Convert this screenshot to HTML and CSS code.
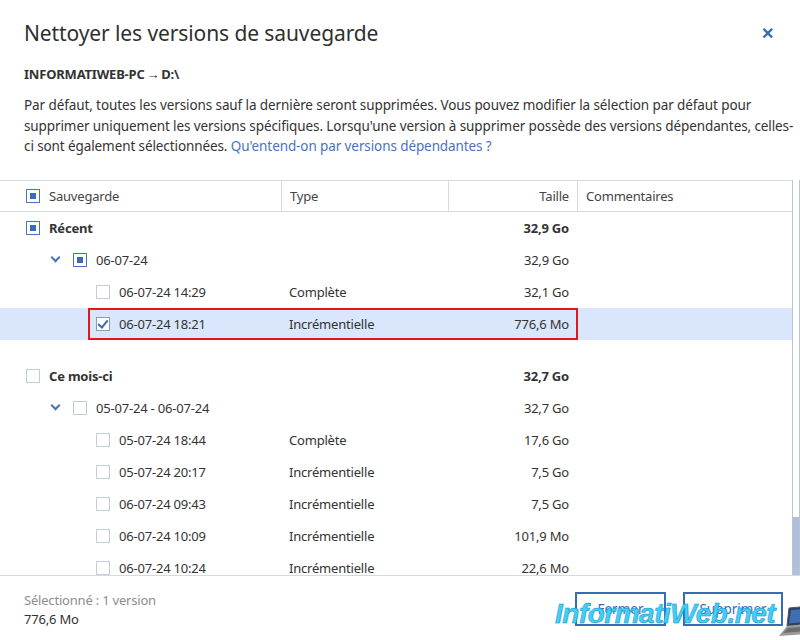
FILE: index.html
```html
<!DOCTYPE html>
<html lang="fr">
<head>
    <meta charset="UTF-8">
    <title>Nettoyer les versions de sauvegarde</title>
    <link rel="stylesheet" href="styles.css">
</head>
<body>
    <div class="dialog">
        <div class="dialog-head">
            <h1>Nettoyer les versions de sauvegarde</h1>
            <span class="close">&#x2715;</span>
        </div>
        <div class="source">INFORMATIWEB-PC&thinsp;&rarr;&thinsp;D:\</div>
        <p class="intro">Par défaut, toutes les versions sauf la dernière seront supprimées. Vous pouvez modifier la sélection par défaut pour<br>supprimer uniquement les versions spécifiques. Lorsqu'une version à supprimer possède des versions dépendantes, celles-<br>ci sont également sélectionnées. <a href="#">Qu'entend-on par versions dépendantes ?</a></p>

        <div class="table-wrap">
            <div class="table">
                <div class="row head">
                    <div class="cell name"><span class="box mixed"></span>Sauvegarde</div>
                    <div class="cell">Type</div>
                    <div class="cell size">Taille</div>
                    <div class="cell">Commentaires</div>
                </div>
                <div class="body">
                    <div class="row group">
                        <div class="cell name"><span class="box mixed"></span>Récent</div>
                        <div class="cell"></div>
                        <div class="cell size">32,9 Go</div>
                        <div class="cell"></div>
                    </div>
                    <div class="row">
                        <div class="cell name lvl1"><span class="chev"></span><span class="box mixed"></span>06-07-24</div>
                        <div class="cell"></div>
                        <div class="cell size">32,9 Go</div>
                        <div class="cell"></div>
                    </div>
                    <div class="row">
                        <div class="cell name lvl2"><span class="box"></span>06-07-24 14:29</div>
                        <div class="cell">Complète</div>
                        <div class="cell size">32,1 Go</div>
                        <div class="cell"></div>
                    </div>
                    <div class="row selected">
                        <div class="cell name lvl2"><span class="box checked"></span>06-07-24 18:21</div>
                        <div class="cell">Incrémentielle</div>
                        <div class="cell size">776,6 Mo</div>
                        <div class="cell"></div>
                        <span class="mark"></span>
                    </div>
                    <div class="spacer"></div>
                    <div class="row group">
                        <div class="cell name"><span class="box"></span>Ce mois-ci</div>
                        <div class="cell"></div>
                        <div class="cell size">32,7 Go</div>
                        <div class="cell"></div>
                    </div>
                    <div class="row">
                        <div class="cell name lvl1"><span class="chev"></span><span class="box"></span>05-07-24 - 06-07-24</div>
                        <div class="cell"></div>
                        <div class="cell size">32,7 Go</div>
                        <div class="cell"></div>
                    </div>
                    <div class="row">
                        <div class="cell name lvl2"><span class="box"></span>05-07-24 18:44</div>
                        <div class="cell">Complète</div>
                        <div class="cell size">17,6 Go</div>
                        <div class="cell"></div>
                    </div>
                    <div class="row">
                        <div class="cell name lvl2"><span class="box"></span>05-07-24 20:17</div>
                        <div class="cell">Incrémentielle</div>
                        <div class="cell size">7,5 Go</div>
                        <div class="cell"></div>
                    </div>
                    <div class="row">
                        <div class="cell name lvl2"><span class="box"></span>06-07-24 09:43</div>
                        <div class="cell">Incrémentielle</div>
                        <div class="cell size">7,5 Go</div>
                        <div class="cell"></div>
                    </div>
                    <div class="row">
                        <div class="cell name lvl2"><span class="box"></span>06-07-24 10:09</div>
                        <div class="cell">Incrémentielle</div>
                        <div class="cell size">101,9 Mo</div>
                        <div class="cell"></div>
                    </div>
                    <div class="row">
                        <div class="cell name lvl2"><span class="box"></span>06-07-24 10:24</div>
                        <div class="cell">Incrémentielle</div>
                        <div class="cell size">22,6 Mo</div>
                        <div class="cell"></div>
                    </div>
                </div>
            </div>
            <div class="scrollbar"><div class="thumb"></div></div>
        </div>

        <div class="footer">
            <div class="summary">
                <div class="muted">Sélectionné : 1 version</div>
                <div>776,6 Mo</div>
            </div>
            <div class="actions">
                <button class="btn fermer">Fermer</button>
                <button class="btn">Supprimer</button>
            </div>
        </div>

        <div class="watermark">
            <span>InformatiWeb.net</span>
            <svg width="34" height="30" viewBox="0 0 34 30">
                <polygon points="10,2 32,0 30,18 8,20" fill="#2a3f6a" stroke="#555" stroke-width="1"/>
                <polygon points="12,4 30,2.5 28.5,16 10,17.5" fill="#3f6fb0"/>
                <polygon points="8,20 30,18 26,28 0,30" fill="#9a9a9a"/>
                <polygon points="9,22 27,20.5 25,25 4,27" fill="#6d6d6d"/>
            </svg>
        </div>
    </div>
</body>
</html>
```

FILE: styles.css
```css
body {
    margin: 0;
    background: #fff;
    font-family: "Noto Sans", "Open Sans", sans-serif;
    color: #333;
}
.dialog {
    position: relative;
    width: 800px;
    height: 640px;
    overflow: hidden;
}
.dialog-head {
    display: flex;
    justify-content: space-between;
    align-items: center;
    padding: 18px 24px 0 24px;
    height: 30px;
}
h1 {
    margin: 0;
    font-size: 21px;
    font-weight: normal;
    color: #2f2f2f;
    letter-spacing: -0.1px;
}
.close {
    color: #3a6bb5;
    font-size: 16px;
    font-weight: bold;
    margin-right: 2px;
}
.source {
    margin: 17px 24px 0 24px;
    font-size: 13px;
    font-weight: bold;
    letter-spacing: -0.2px;
    color: #333;
}
.intro {
    margin: 12px 10px 0 24px;
    font-size: 13.5px;
    line-height: 20.5px;
    color: #333;
    letter-spacing: -0.1px;
    white-space: nowrap;
}
.intro a {
    color: #4a74b9;
    text-decoration: none;
}
.table-wrap {
    display: flex;
    margin-top: 23px;
    height: 395px;
    border-bottom: 1px solid #d3dae6;
}
.table {
    flex: 1;
    overflow: hidden;
    border-top: 1px solid #d3dae6;
    border-right: 1px solid #b8c4d8;
}
.row {
    position: relative;
    display: grid;
    grid-template-columns: 281px 167px 129px 1fr;
    height: 32px;
    align-items: center;
    font-size: 13px;
    letter-spacing: -0.2px;
}
.row.head {
    height: 30px;
    border-bottom: 1px solid #d3dae6;
    color: #444;
}
.row.head .cell {
    height: 100%;
    display: flex;
    align-items: center;
}
.row.head .cell + .cell {
    border-left: 1px solid #d3dae6;
}
.row.head .size {
    justify-content: flex-end;
}
.cell {
    padding: 0 8px;
    white-space: nowrap;
}
.cell.name {
    display: flex;
    align-items: center;
    padding-left: 26px;
}
.cell.lvl1 {
    padding-left: 51px;
}
.cell.lvl2 {
    padding-left: 96px;
}
.cell.size {
    text-align: right;
}
.row.group {
    font-weight: bold;
}
.row.selected {
    background: #d9e6fb;
}
.mark {
    position: absolute;
    left: 88px;
    top: 0;
    width: 486px;
    height: 28px;
    border: 2px solid #e8141b;
}
.spacer {
    height: 20px;
}
.box {
    display: inline-block;
    box-sizing: border-box;
    width: 14px;
    height: 14px;
    border: 1px solid #c3ccdb;
    background: #fff;
    margin-right: 9px;
    position: relative;
}
.box.mixed {
    border-color: #4a72b4;
}
.box.mixed::after {
    content: "";
    position: absolute;
    left: 3px;
    top: 3px;
    width: 6px;
    height: 6px;
    background: #3a6bb5;
}
.box.checked {
    border-color: #8c9ab5;
}
.box.checked::after {
    content: "";
    position: absolute;
    left: 3px;
    top: 0px;
    width: 4px;
    height: 8px;
    border: solid #3a6bb5;
    border-width: 0 2px 2px 0;
    transform: rotate(40deg);
}
.chev {
    display: inline-block;
    width: 5px;
    height: 5px;
    border: solid #4a72b4;
    border-width: 0 2px 2px 0;
    transform: rotate(45deg);
    margin: -4px 14px 0 1px;
}
.scrollbar {
    width: 6px;
    border-right: 1px solid #b8c4d8;
    display: flex;
    flex-direction: column;
    justify-content: flex-end;
}
.thumb {
    height: 58px;
    background: #b1c0da;
}
.footer {
    display: flex;
    justify-content: space-between;
    padding: 14px 17px 0 24px;
    font-size: 13px;
    letter-spacing: -0.2px;
}
.summary {
    line-height: 19px;
    padding-top: 1px;
}
.muted {
    color: #8d8d8d;
}
.actions {
    display: flex;
    gap: 17px;
    padding-top: 2px;
}
.btn {
    width: 100px;
    height: 34px;
    border: 2px solid #3a6bb5;
    background: #fff;
    color: #3a6bb5;
    font-family: inherit;
    font-size: 13.5px;
}
.btn.fermer {
    width: 91px;
}
.watermark {
    position: absolute;
    left: 555px;
    top: 598px;
    display: flex;
    align-items: flex-end;
}
.watermark span {
    font-family: "Liberation Sans", sans-serif;
    font-style: italic;
    font-weight: bold;
    font-size: 28px;
    color: #3fd0f6;
    letter-spacing: -0.5px;
    -webkit-text-stroke: 0.5px #1487c4;
}
.watermark svg {
    margin-left: 4px;
    margin-bottom: -6px;
}
```
